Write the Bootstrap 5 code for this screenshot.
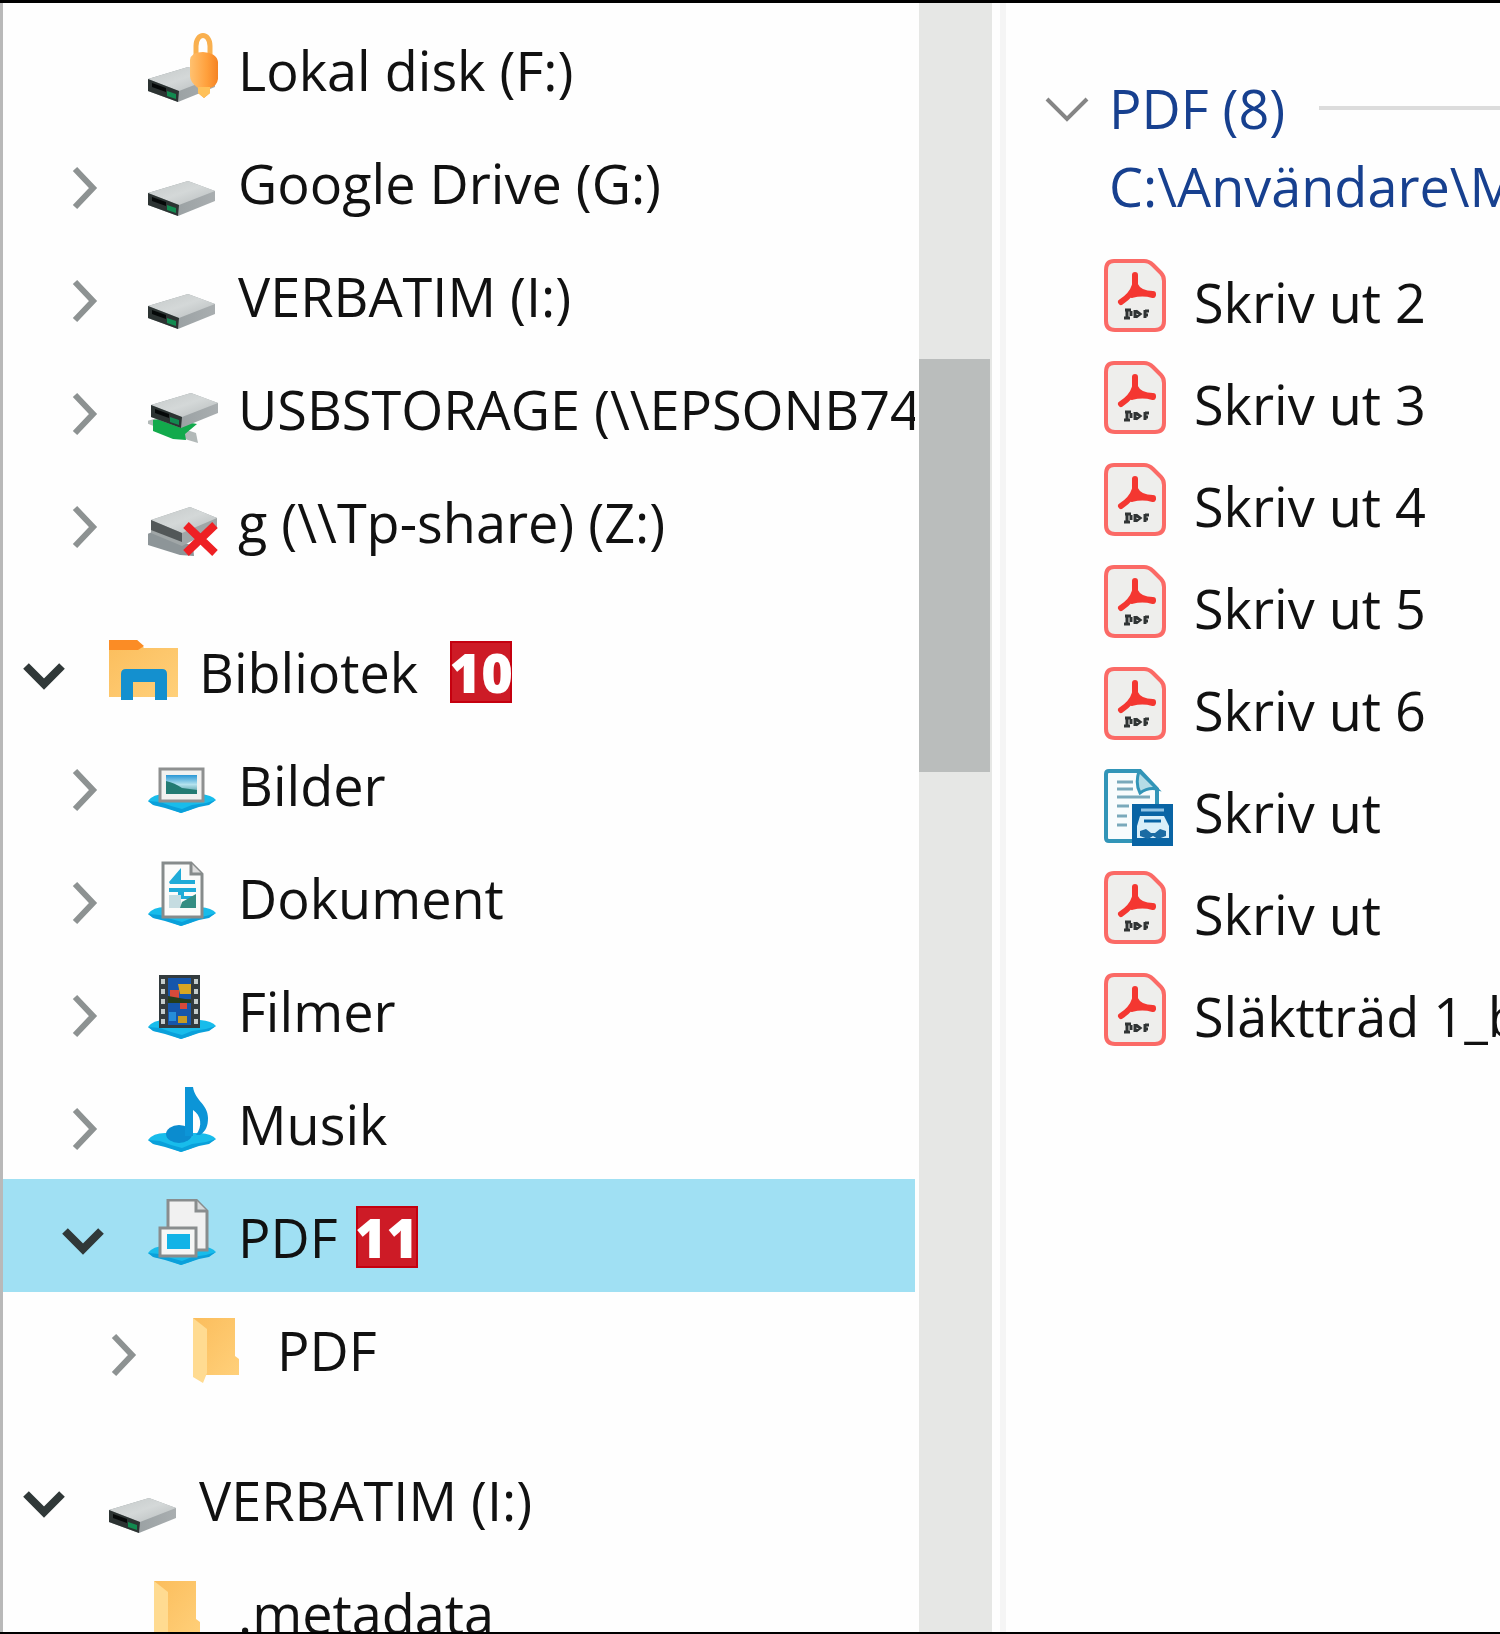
<!DOCTYPE html>
<html lang="sv">
<head>
<meta charset="utf-8">
<meta name="viewport" content="width=device-width, initial-scale=1">
<title>Utforskaren</title>
<link href="https://cdn.jsdelivr.net/npm/bootstrap@5.3.0/dist/css/bootstrap.min.css" rel="stylesheet">
<style>
body{font-family:"Open Sans","Noto Sans",sans-serif;font-size:54px;line-height:72px;color:#111;background:#fefefe}
.explorer{border-top:3px solid #000;border-bottom:2px solid #000}
.tree-pane{flex:0 0 61%;border-left:3px solid #b9b9b9;padding-top:9px}
.tree-row{height:113px;padding-top:3px;padding-left:16px}
.tree-row.level-1{padding-left:55px}
.tree-row.level-2{padding-left:94px}
.tree-row.selected{background:#a0e0f3}
.group-start{margin-top:37px}
.toggle{width:52px;height:76px;color:#8d9292}
.toggle.open{color:#303838}
.toggle-space{width:52px}
.chev{fill:none;stroke:currentColor;stroke-width:6}
.chev-open{stroke-width:8}
.tree-link{margin-left:38px;gap:18px;color:inherit}
.tree-link:hover,.file-link:hover{color:inherit}
.tree-icon{width:72px;height:76px;overflow:visible}
.step{width:62px;height:62px;line-height:58px;margin-left:18px;background:#cd1b26;border:2px solid #c5000f;color:#fff;font-weight:800}
.group-start .step{margin-left:32px}
.scroll-track{flex:0 0 73px;background:#e6e7e5;margin-left:4px}
.scroll-before{flex:356}
.scroll-thumb{flex:413;background:#babdbc;margin-right:2px}
.scroll-after{flex:860}
.splitter{flex:0 0 6px;margin-left:8px;background:#f5f5f5}
.file-pane{min-width:0;padding:66px 0 0 35px}
.group-title,.group-path{color:#17408f;line-height:78px}
.group-toggle{width:50px;height:78px;margin-right:18px;color:#858585}
.group-toggle .chev{stroke-width:4}
.group-line{height:4px;background:#dcdcdc;margin-left:34px}
.group-path{padding-left:68px}
.file-list{padding-left:63px;margin-top:26px}
.file-row{height:102px}
.file-link{gap:18px;color:inherit}
.file-icon{width:72px;height:78px;margin-bottom:8px}
</style>
<script src="https://cdn.jsdelivr.net/npm/bootstrap@5.3.0/dist/js/bootstrap.bundle.min.js"></script>
</head>
<body>
<svg width="0" height="0" class="position-absolute" aria-hidden="true">
<defs>
<linearGradient id="gTop" x1="0" y1="0" x2="1" y2="1"><stop offset="0" stop-color="#c4c9c9"/><stop offset=".5" stop-color="#d4d8d8"/><stop offset="1" stop-color="#b6bbbc"/></linearGradient>
<linearGradient id="gSide" x1="0" y1="0" x2="1" y2="0"><stop offset="0" stop-color="#90989a"/><stop offset="1" stop-color="#a9aeb0"/></linearGradient>
<linearGradient id="gLock" x1="0" y1="0" x2="1" y2="0"><stop offset="0" stop-color="#ffc170"/><stop offset=".6" stop-color="#ffa03c"/><stop offset="1" stop-color="#f58324"/></linearGradient>
<linearGradient id="gFold" x1="0" y1="0" x2="1" y2="1"><stop offset="0" stop-color="#fbbd5c"/><stop offset="1" stop-color="#ffd07a"/></linearGradient>
<linearGradient id="gPhoto" x1="0" y1="0" x2="0" y2="1"><stop offset="0" stop-color="#2a97d6"/><stop offset=".5" stop-color="#b4e2ee"/><stop offset="1" stop-color="#3f8f95"/></linearGradient>
<symbol id="body-drive" viewBox="0 0 72 76"><path d="M0 48 40 36 67 46V56L30 71 0 60Z" fill="url(#gSide)"/><path d="M0 48 40 36 67 46 31 60Z" fill="url(#gTop)"/><path d="M0 48 31 60 30 71 0 60Z" fill="#2c3332"/><path d="M4 52 18 57V61L4 56Z" fill="#050808"/><path d="M19 60 28 63V68L19 65Z" fill="#128a50"/></symbol>
<symbol id="drive" viewBox="0 0 72 76"><use href="#body-drive" width="72" height="76"/></symbol>
<symbol id="lockdrive" viewBox="0 0 72 76"><use href="#body-drive" width="72" height="76" y="-1"/><path d="M48 25V14C48 0 62 0 62 14V25" fill="none" stroke="#f9b04f" stroke-width="5"/><path d="M42 28Q43 20 55 20 69 21 70 30V47Q69 54 62 56V61L56 66 50 61V56Q42 50 42 44Z" fill="url(#gLock)"/><path d="M50 55H62V61L56 66 50 61Z" fill="#ffc15a"/></symbol>
<symbol id="netdrive" viewBox="0 0 72 76"><path d="M-4 51 6 48 48 62 50 72 40 69Z" fill="#b2b9b8"/><path d="M5 49 17 47 49 53 37 63 38 69 25 68 5 60Z" fill="#12aa4c"/><use href="#body-drive" width="72" height="76" x="3" y="-14"/></symbol>
<symbol id="offdrive" viewBox="0 0 72 76"><path d="M-3 51 7 47 45 62 46 72 32 71-3 60Z" fill="#8d9598"/><path d="M3 36 42 23 69 34V44L34 62 3 49Z" fill="#a0a6a7"/><path d="M3 36 42 23 69 34 34 49Z" fill="url(#gTop)"/><path d="M3 36 34 49V58L3 46Z" fill="#525758"/><path d="M38 41 67 69M67 41 38 69" stroke="#ee2024" stroke-width="8"/></symbol>
<symbol id="library" viewBox="0 0 72 76"><path d="M0 6H28L35 14H69V63H0Z" fill="url(#gFold)"/><path d="M0 6H28L35 12 29 16H0Z" fill="#fb8c25"/><path d="M12 66V40Q12 35 17 35H53Q58 35 58 40V66H46V48H24V66Z" fill="#1490cf"/></symbol>
<symbol id="puddle" viewBox="0 0 72 76"><path d="M0 54Q5 47 17 47H52Q64 48 68 53L61 57 51 59 42 63 33 66 25 63 17 60 6 58Z" fill="#18bceb"/><path d="M0 54 12 55 23 59 34 62 44 58 58 56 68 53 61 58 51 60 42 63 33 66 17 61 5 58Z" fill="#0aa0da"/></symbol>
<symbol id="pictures" viewBox="0 0 72 76"><use href="#puddle" width="72" height="76"/><path d="M12 22H55V54H12Z" fill="#f1f1f0" stroke="#8e9090" stroke-width="3"/><path d="M18 28H49V47H18Z" fill="url(#gPhoto)"/><path d="M18 34Q27 36 34 41L49 43V47H18Z" fill="#237b73"/></symbol>
<symbol id="documents" viewBox="0 0 72 76"><use href="#puddle" width="72" height="76"/><path d="M15 3H43L54 14V57H15Z" fill="#fbfbfa" stroke="#868b8b" stroke-width="3"/><path d="M43 3V14H54" fill="#ddd" stroke="#868b8b" stroke-width="3"/><path d="M21 22 33 8V20H47V24H22ZM21 28H48V32H36V36H48V39H30V32H21Z" fill="#20abd8"/><path d="M21 35H33V48H21Z" fill="#c5dce1"/><path d="M34 42 48 34V48H32Z" fill="#348d83"/></symbol>
<symbol id="movies" viewBox="0 0 72 76"><use href="#puddle" width="72" height="76"/><path d="M11 2H52V55H11Z" fill="#333b3e"/><path d="M20 5H43V26H20ZM20 30H43V52H20Z" fill="#1556ab"/><path d="M15 6V54M48 6V54" stroke="#c3cbcb" stroke-width="4" stroke-dasharray="5 5"/><path d="M30 11H43V21H32Z" fill="#d8a623"/><path d="M22 17H31V25H22ZM32 30H39V36H32Z" fill="#d64a3b"/><path d="M20 23 43 27V30H20Z" fill="#253d1c"/><path d="M30 43H39V50H30Z" fill="#c69b24"/><path d="M21 39H28V48H21Z" fill="#268dd9"/></symbol>
<symbol id="music" viewBox="0 0 72 76"><use href="#puddle" width="72" height="76"/><ellipse cx="31" cy="48" rx="13" ry="9" fill="#0b8ccf"/><path d="M37 1H45C47 15 60 18 60 32 60 40 58 45 52 49H48C55 40 53 29 45 24V50H37Z" fill="#0c95d7"/></symbol>
<symbol id="pdflib" viewBox="0 0 72 76"><use href="#puddle" width="72" height="76"/><path d="M20 1H48L59 12V51H20Z" fill="#f1f1f1" stroke="#898d8e" stroke-width="3"/><path d="M48 1V12H59" fill="#d6d9da" stroke="#898d8e" stroke-width="3"/><path d="M12 29H48V57H12Z" fill="#f6f6f5" stroke="#898d8e" stroke-width="3"/><path d="M19 35H42V50H19Z" fill="#12b3e7"/></symbol>
<symbol id="folder" viewBox="0 0 72 76"><path d="M6 6H48V44L52 47V63H14Z" fill="url(#gFold)"/><path d="M6 6 20 17V61L16 71 6 65Z" fill="#ffdb91"/></symbol>
<symbol id="pdffile" viewBox="0 0 72 78"><path d="M10 2H40Q45 2 49 6L57 14Q60 17 60 22V62Q60 71 51 71H11Q2 71 2 62V11Q2 2 10 2Z" fill="#eeeeec" stroke="#fb6a66" stroke-width="4"/><path d="M31 16V26Q28 36 17 43M31 26Q35 35 49 35M28 36Q38 33 49 36" fill="none" stroke="#f43731" stroke-width="6" stroke-linecap="round"/><path d="M21 51H27M23 51V59M20 59H26M27 52V57M31 51V59M32 52 36 55 32 58M41 51V59M41 52H45M41 56H44" fill="none" stroke="#303434" stroke-width="3"/></symbol>
<symbol id="docfile" viewBox="0 0 72 78"><path d="M5 2H36L53 20V72H5Q2 72 2 69V5Q2 2 5 2Z" fill="#f8fcfd" stroke="#3295b8" stroke-width="4"/><path d="M35 2 53 20Q44 18 36 24Q31 15 35 2Z" fill="#b5dce6" stroke="#3295b8" stroke-width="3"/><path d="M13 13H29M13 20H29M13 28H46M13 37H25M13 47H23M13 56H23" stroke="#79a9bb" stroke-width="3"/><path d="M28 35H69V77H28Z" fill="#0964a4"/><path d="M37 41H60" stroke="#8fc3e4" stroke-width="3"/><path d="M36 47H60L65 57V69H33V57Z" fill="#d9eff9"/><path d="M40 52H57" stroke="#0964a4" stroke-width="3"/><path d="M36 62 42 60 47 64H51L56 60 62 62V67L54 70 49 67 44 70 36 67Z" fill="#1b6ba3"/></symbol>
<symbol id="right" viewBox="0 0 52 76"><path class="chev" d="M17 24 35 43 17 62"/></symbol>
<symbol id="down" viewBox="0 0 52 76"><path class="chev chev-open" d="M7 32 25 50 43 32"/></symbol>
</defs>
</svg>
<main class="explorer d-flex vh-100 overflow-hidden">
<nav class="tree-pane overflow-hidden text-nowrap" aria-label="Mappträd">
<ul class="list-unstyled m-0">
<li class="tree-row level-1 d-flex align-items-center"><span class="toggle-space flex-shrink-0"></span><a href="#" class="tree-link d-flex align-items-center text-decoration-none"><svg class="tree-icon"><use href="#lockdrive"/></svg>Lokal disk (F:)</a></li>
<li class="tree-row level-1 d-flex align-items-center"><button type="button" class="toggle btn p-0 border-0 d-flex flex-shrink-0" aria-label="Expandera"><svg width="52" height="76"><use href="#right"/></svg></button><a href="#" class="tree-link d-flex align-items-center text-decoration-none"><svg class="tree-icon"><use href="#drive"/></svg>Google Drive (G:)</a></li>
<li class="tree-row level-1 d-flex align-items-center"><button type="button" class="toggle btn p-0 border-0 d-flex flex-shrink-0" aria-label="Expandera"><svg width="52" height="76"><use href="#right"/></svg></button><a href="#" class="tree-link d-flex align-items-center text-decoration-none"><svg class="tree-icon"><use href="#drive"/></svg>VERBATIM (I:)</a></li>
<li class="tree-row level-1 d-flex align-items-center"><button type="button" class="toggle btn p-0 border-0 d-flex flex-shrink-0" aria-label="Expandera"><svg width="52" height="76"><use href="#right"/></svg></button><a href="#" class="tree-link d-flex align-items-center text-decoration-none"><svg class="tree-icon flex-shrink-0"><use href="#netdrive"/></svg>USBSTORAGE (\\EPSONB74</a></li>
<li class="tree-row level-1 d-flex align-items-center"><button type="button" class="toggle btn p-0 border-0 d-flex flex-shrink-0" aria-label="Expandera"><svg width="52" height="76"><use href="#right"/></svg></button><a href="#" class="tree-link d-flex align-items-center text-decoration-none"><svg class="tree-icon"><use href="#offdrive"/></svg>g (\\Tp-share) (Z:)</a></li>
<li class="tree-row group-start d-flex align-items-center"><button type="button" class="toggle open btn p-0 border-0 d-flex flex-shrink-0" aria-label="Komprimera" aria-expanded="true"><svg width="52" height="76"><use href="#down"/></svg></button><a href="#" class="tree-link d-flex align-items-center text-decoration-none"><svg class="tree-icon"><use href="#library"/></svg>Bibliotek</a><span class="step d-flex justify-content-center">10</span></li>
<li class="tree-row level-1 d-flex align-items-center"><button type="button" class="toggle btn p-0 border-0 d-flex flex-shrink-0" aria-label="Expandera"><svg width="52" height="76"><use href="#right"/></svg></button><a href="#" class="tree-link d-flex align-items-center text-decoration-none"><svg class="tree-icon"><use href="#pictures"/></svg>Bilder</a></li>
<li class="tree-row level-1 d-flex align-items-center"><button type="button" class="toggle btn p-0 border-0 d-flex flex-shrink-0" aria-label="Expandera"><svg width="52" height="76"><use href="#right"/></svg></button><a href="#" class="tree-link d-flex align-items-center text-decoration-none"><svg class="tree-icon"><use href="#documents"/></svg>Dokument</a></li>
<li class="tree-row level-1 d-flex align-items-center"><button type="button" class="toggle btn p-0 border-0 d-flex flex-shrink-0" aria-label="Expandera"><svg width="52" height="76"><use href="#right"/></svg></button><a href="#" class="tree-link d-flex align-items-center text-decoration-none"><svg class="tree-icon"><use href="#movies"/></svg>Filmer</a></li>
<li class="tree-row level-1 d-flex align-items-center"><button type="button" class="toggle btn p-0 border-0 d-flex flex-shrink-0" aria-label="Expandera"><svg width="52" height="76"><use href="#right"/></svg></button><a href="#" class="tree-link d-flex align-items-center text-decoration-none"><svg class="tree-icon"><use href="#music"/></svg>Musik</a></li>
<li class="tree-row level-1 selected d-flex align-items-center"><button type="button" class="toggle open btn p-0 border-0 d-flex flex-shrink-0" aria-label="Komprimera" aria-expanded="true"><svg width="52" height="76"><use href="#down"/></svg></button><a href="#" class="tree-link d-flex align-items-center text-decoration-none" aria-current="page"><svg class="tree-icon"><use href="#pdflib"/></svg>PDF</a><span class="step d-flex justify-content-center">11</span></li>
<li class="tree-row level-2 d-flex align-items-center"><button type="button" class="toggle btn p-0 border-0 d-flex flex-shrink-0" aria-label="Expandera"><svg width="52" height="76"><use href="#right"/></svg></button><a href="#" class="tree-link d-flex align-items-center text-decoration-none"><svg class="tree-icon"><use href="#folder"/></svg>PDF</a></li>
<li class="tree-row group-start d-flex align-items-center"><button type="button" class="toggle open btn p-0 border-0 d-flex flex-shrink-0" aria-label="Komprimera" aria-expanded="true"><svg width="52" height="76"><use href="#down"/></svg></button><a href="#" class="tree-link d-flex align-items-center text-decoration-none"><svg class="tree-icon"><use href="#drive"/></svg>VERBATIM (I:)</a></li>
<li class="tree-row level-1 d-flex align-items-center"><span class="toggle-space flex-shrink-0"></span><a href="#" class="tree-link d-flex align-items-center text-decoration-none"><svg class="tree-icon"><use href="#folder"/></svg>.metadata</a></li>
</ul>
</nav>
<div class="scroll-track d-flex flex-column" aria-hidden="true"><div class="scroll-before"></div><div class="scroll-thumb"></div><div class="scroll-after"></div></div>
<div class="splitter"></div>
<section class="file-pane flex-fill overflow-hidden text-nowrap">
<div class="group-title d-flex align-items-center"><button type="button" class="group-toggle btn p-0 border-0 d-flex flex-shrink-0" aria-label="Komprimera grupp" aria-expanded="true"><svg width="50" height="78"><path class="chev" d="M6 30 26 50 46 30"/></svg></button><span>PDF (8)</span><span class="group-line flex-fill"></span></div>
<div class="group-path">C:\Användare\M</div>
<ul class="file-list list-unstyled mb-0">
<li class="file-row d-flex align-items-center"><a href="#" class="file-link d-flex align-items-center text-decoration-none"><svg class="file-icon"><use href="#pdffile"/></svg>Skriv ut 2</a></li>
<li class="file-row d-flex align-items-center"><a href="#" class="file-link d-flex align-items-center text-decoration-none"><svg class="file-icon"><use href="#pdffile"/></svg>Skriv ut 3</a></li>
<li class="file-row d-flex align-items-center"><a href="#" class="file-link d-flex align-items-center text-decoration-none"><svg class="file-icon"><use href="#pdffile"/></svg>Skriv ut 4</a></li>
<li class="file-row d-flex align-items-center"><a href="#" class="file-link d-flex align-items-center text-decoration-none"><svg class="file-icon"><use href="#pdffile"/></svg>Skriv ut 5</a></li>
<li class="file-row d-flex align-items-center"><a href="#" class="file-link d-flex align-items-center text-decoration-none"><svg class="file-icon"><use href="#pdffile"/></svg>Skriv ut 6</a></li>
<li class="file-row d-flex align-items-center"><a href="#" class="file-link d-flex align-items-center text-decoration-none"><svg class="file-icon"><use href="#docfile"/></svg>Skriv ut</a></li>
<li class="file-row d-flex align-items-center"><a href="#" class="file-link d-flex align-items-center text-decoration-none"><svg class="file-icon"><use href="#pdffile"/></svg>Skriv ut</a></li>
<li class="file-row d-flex align-items-center"><a href="#" class="file-link d-flex align-items-center text-decoration-none"><svg class="file-icon flex-shrink-0"><use href="#pdffile"/></svg>Släktträd 1_b</a></li>
</ul>
</section>
</main>
</body>
</html>
